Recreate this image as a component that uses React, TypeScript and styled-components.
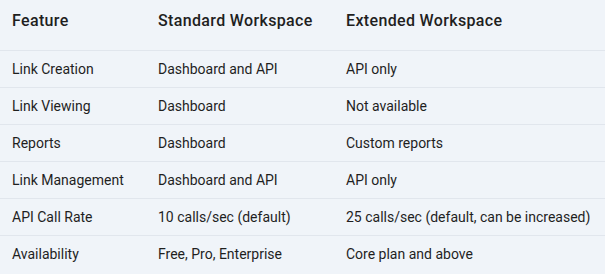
import React from "react";
import styled, { createGlobalStyle } from "styled-components";

const GlobalStyle = createGlobalStyle`
  html, body {
    margin: 0;
    padding: 0;
    background: #f0f4f9;
  }
  body {
    font-family: Roboto, "Liberation Sans", Arial, sans-serif;
    color: #1f1f1f;
    -webkit-font-smoothing: antialiased;
  }
  th, td {
    box-sizing: border-box;
  }
`;

const Table = styled.table`
  width: 605px;
  border-collapse: collapse;
  table-layout: fixed;
`;

const HeadCell = styled.th<{ $width: number }>`
  width: ${(p) => p.$width}px;
  padding: 10px 12px 18px;
  font-size: 16px;
  line-height: 22px;
  font-weight: 500;
  letter-spacing: 0.35px;
  text-align: left;
  border-bottom: 1px solid #e1e6ed;
  white-space: nowrap;
`;

const Row = styled.tr`
  & + & td {
    border-top: 1px solid #e1e6ed;
  }
`;

const Cell = styled.td`
  padding: 8px 12px;
  font-size: 14px;
  line-height: 20px;
  white-space: nowrap;
`;

const columns = [
  { title: "Feature", width: 146 },
  { title: "Standard Workspace", width: 188 },
  { title: "Extended Workspace", width: 271 },
];

const rows = [
  ["Link Creation", "Dashboard and API", "API only"],
  ["Link Viewing", "Dashboard", "Not available"],
  ["Reports", "Dashboard", "Custom reports"],
  ["Link Management", "Dashboard and API", "API only"],
  ["API Call Rate", "10 calls/sec (default)", "25 calls/sec (default, can be increased)"],
  ["Availability", "Free, Pro, Enterprise", "Core plan and above"],
];

export default function App() {
  return (
    <>
      <GlobalStyle />
      <Table>
        <thead>
          <tr>
            {columns.map((c) => (
              <HeadCell key={c.title} $width={c.width}>
                {c.title}
              </HeadCell>
            ))}
          </tr>
        </thead>
        <tbody>
          {rows.map((r) => (
            <Row key={r[0]}>
              {r.map((v, i) => (
                <Cell key={i}>{v}</Cell>
              ))}
            </Row>
          ))}
        </tbody>
      </Table>
    </>
  );
}
